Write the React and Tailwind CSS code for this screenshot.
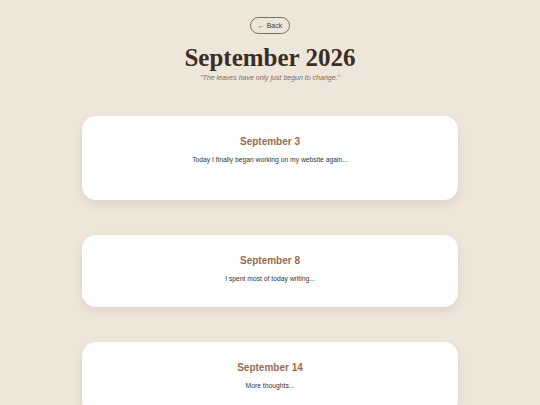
import React from "react";

const entries = [
  { date: "September 3", text: "Today I finally began working on my website again...", h: "h-[84px]" },
  { date: "September 8", text: "I spent most of today writing...", h: "h-[72px]" },
  { date: "September 14", text: "More thoughts...", h: "h-[72px]" },
];

const App = () => {
  return (
    <div className="min-h-screen bg-[#efe6da] flex flex-col items-center pt-[17px] font-['Liberation_Sans',Arial,sans-serif]">
      <button className="h-[17px] px-[7px] rounded-full border border-[#8a6a55] text-[7px] leading-none text-[#4a3a2e] flex items-center">
        ← Back
      </button>
      <h1 className="mt-[10px] text-[25px] leading-[28px] font-bold text-[#3a2e24] font-['Liberation_Serif',Georgia,serif]">
        September 2026
      </h1>
      <p className="mt-[1px] text-[7px] italic text-[#7a6d62]">
        "The leaves have only just begun to change."
      </p>
      <div className="mt-[32px] flex flex-col gap-[35px] w-[376px]">
        {entries.map((e) => (
          <div
            key={e.date}
            className={`bg-white rounded-[14px] shadow-[0_4px_10px_rgba(120,90,60,0.15)] flex flex-col items-center pt-[19px] ${e.h} shrink-0`}
          >
            <h2 className="text-[10px] leading-[13px] font-bold text-[#9a6a4e]">{e.date}</h2>
            <p className="mt-[7px] text-[6.75px] leading-[9px] text-[#333]">{e.text}</p>
          </div>
        ))}
      </div>
    </div>
  );
};

export default App;
